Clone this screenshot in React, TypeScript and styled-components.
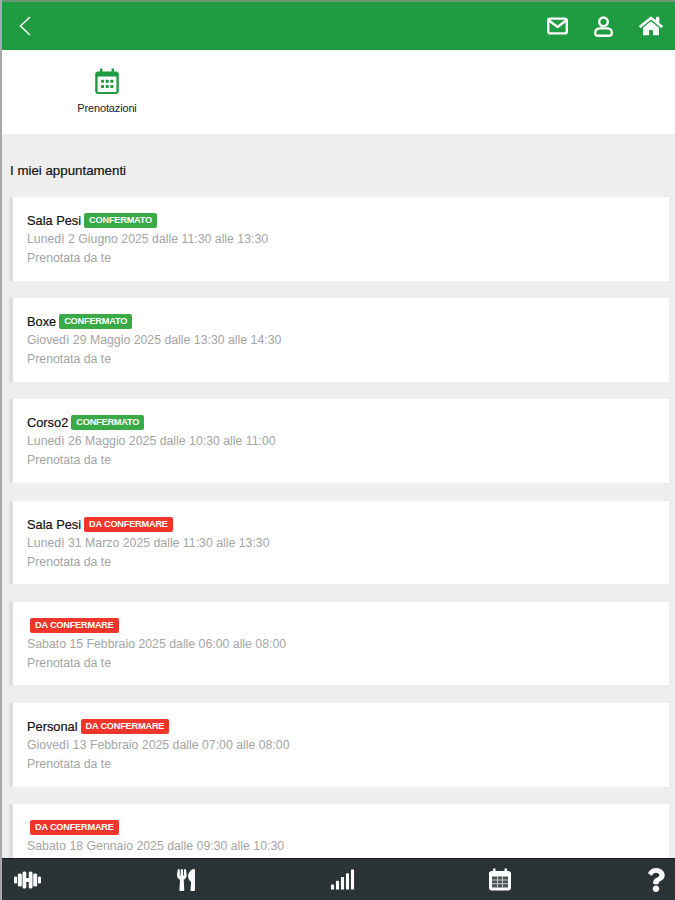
import React, { FC } from 'react';
import styled, { createGlobalStyle } from 'styled-components';
import { FaHome, FaQuestion, FaSignal, FaUtensils } from 'react-icons/fa';

const GlobalStyle = createGlobalStyle`
  html, body {
    margin: 0;
    padding: 0;
    height: 100%;
    overflow: hidden;
  }
  body {
    font-family: 'Liberation Sans', Arial, sans-serif;
    background: #eeeeee;
  }
`;

const Page = styled.div`
  display: flex;
  flex-direction: column;
  width: 675px;
  height: 900px;
  box-sizing: border-box;
  border-left: 2px solid #a9a9a9;
  overflow: hidden;
`;

const Header = styled.header`
  flex: none;
  display: flex;
  align-items: center;
  justify-content: space-between;
  height: 50px;
  box-sizing: border-box;
  margin-left: -2px;
  border-top: 2px solid #6f9472;
  background: #1f9c41;
  padding: 0 12px 0 19px;
`;

const HeaderActions = styled.div`
  display: flex;
  align-items: center;
  gap: 26px;
`;

const IconSlot = styled.span`
  display: flex;
  color: #ffffff;
`;

const Shortcuts = styled.nav`
  flex: none;
  height: 84px;
  background: #ffffff;
  display: flex;
  padding-left: 71px;
`;

const Shortcut = styled.div`
  display: flex;
  flex-direction: column;
  align-items: center;
  width: 68px;
  padding-top: 17px;
  gap: 7px;
`;

const ShortcutLabel = styled.span`
  font-size: 11px;
  letter-spacing: -0.15px;
  white-space: nowrap;
  color: #222222;
`;

const Content = styled.main`
  flex: 1;
  min-height: 0;
  overflow: hidden;
  padding: 29px 6px 0 7px;
`;

const SectionTitle = styled.h2`
  margin: 0 0 18px 1px;
  font-size: 13.3px;
  line-height: 16px;
  font-weight: 400;
  color: #111111;
  -webkit-text-stroke: 0.2px #111111;
`;

const List = styled.div`
  display: flex;
  flex-direction: column;
  gap: 17.5px;
`;

const Card = styled.article`
  flex: none;
  height: 83.7px;
  box-sizing: border-box;
  background: #ffffff;
  border-left: 4px solid #dedede;
  padding: 14px 12px 0 14px;
`;

const TitleRow = styled.div`
  display: flex;
  align-items: center;
  gap: 3px;
  height: 19px;
`;

const Title = styled.span`
  font-size: 12.8px;
  color: #111111;
  -webkit-text-stroke: 0.2px #111111;
`;

const Badge = styled.span<{ $pending?: boolean }>`
  display: inline-block;
  padding: 0 5px;
  height: 15px;
  line-height: 15px;
  border-radius: 2px;
  font-size: 9.2px;
  font-weight: 700;
  letter-spacing: -0.2px;
  color: #ffffff;
  background: ${({ $pending }) => ($pending ? '#f0352b' : '#3aaa47')};
`;

const BadgeOnly = styled.span`
  margin-left: 3px;
  display: flex;
`;

const Detail = styled.div`
  font-size: 12.3px;
  line-height: 19px;
  white-space: nowrap;
  color: #a5a5a5;
`;

const BottomBar = styled.footer`
  flex: none;
  height: 42px;
  margin-left: -2px;
  box-sizing: border-box;
  border-top: 1px solid #11181a;
  background: #2a3336;
  display: flex;
  align-items: center;
  justify-content: space-between;
  padding: 0 7px 0 14px;
`;

const BottomIcon = styled.span`
  display: flex;
  color: #ffffff;
`;

const BackIcon = () => (
  <svg width="12" height="20" viewBox="0 0 12 20" fill="none" stroke="#fff" strokeWidth="1.5">
    <path d="M11 1 1.500 10l9.500 9" />
  </svg>
);

const MailIcon = () => (
  <svg width="21" height="18" viewBox="0 0 21 18" fill="none" stroke="#fff" strokeWidth="2.400" strokeLinejoin="round">
    <rect x="1.200" y="1.600" width="18.600" height="14.800" rx="2" />
    <path d="m2 3.500 8.500 6.500L19 3.500" />
  </svg>
);

const UserIcon = () => (
  <svg width="19" height="21" viewBox="0 0 19 21" fill="none" stroke="#fff" strokeWidth="2.400">
    <circle cx="9.500" cy="5.800" r="4.300" />
    <path d="M6 12.400h7c2.700 0 4.800 1.700 4.800 4v.6c0 1.600-1 2.800-2.600 2.800H3.800c-1.600 0-2.600-1.200-2.600-2.800v-.6c0-2.300 2.100-4 4.800-4Z" />
  </svg>
);

const GreenCalendar = () => (
  <svg width="24" height="28" viewBox="0 0 24 28">
    <path
      fill="#1f9c41"
      d="M5 1.500h2.400v3h9.200v-3H19v3h2.200c1.500 0 2.600 1.100 2.600 2.600v17.200c0 1.500-1.100 2.600-2.600 2.600H2.800c-1.500 0-2.600-1.100-2.600-2.600V7.100c0-1.500 1.100-2.600 2.600-2.600H5Z"
    />
    <rect x="2.600" y="9.500" width="18.800" height="15.500" rx="0.600" fill="#fff" />
    {[6, 10.700, 15.400].map((x) =>
      [12.800, 18].map((y) => (
        <rect key={`${x}-${y}`} x={x} y={y} width="3" height="3" rx="0.500" fill="#1f9c41" />
      ))
    )}
  </svg>
);

const DumbbellIcon = () => (
  <svg width="27" height="18" viewBox="0 0 27 18" fill="#fff">
    <rect x="0" y="5.500" width="3" height="7" rx="1.200" />
    <rect x="3.800" y="2.500" width="4" height="13" rx="1.500" />
    <rect x="8.500" y="0.500" width="3.800" height="17" rx="1.500" />
    <rect x="12" y="7" width="3" height="4" />
    <rect x="14.700" y="0.500" width="3.800" height="17" rx="1.500" />
    <rect x="19.200" y="2.500" width="4" height="13" rx="1.500" />
    <rect x="24" y="5.500" width="3" height="7" rx="1.200" />
  </svg>
);

const DarkCalendar = () => (
  <svg width="22" height="23" viewBox="0 0 22 23">
    <path
      fill="#fff"
      d="M4 .5h2.500V3h9V.5H18V3h1.500C20.900 3 22 4.100 22 5.500V20c0 1.400-1.100 2.500-2.500 2.500h-17C1.100 22.500 0 21.400 0 20V5.500C0 4.100 1.100 3 2.500 3H4Z"
    />
    <rect x="3" y="8.500" width="16" height="11" fill="#4a5357" />
    <path stroke="#c8c8c8" strokeWidth="1" d="M3 12h16M3 15.700h16M8.500 8.500v11M13.500 8.500v11" />
  </svg>
);

type Appointment = {
  title: string;
  when: string;
  pending?: boolean;
};

const appointments: Appointment[] = [
  { title: 'Sala Pesi', when: 'Lunedì 2 Giugno 2025 dalle 11:30 alle 13:30' },
  { title: 'Boxe', when: 'Giovedì 29 Maggio 2025 dalle 13:30 alle 14:30' },
  { title: 'Corso2', when: 'Lunedì 26 Maggio 2025 dalle 10:30 alle 11:00' },
  { title: 'Sala Pesi', when: 'Lunedì 31 Marzo 2025 dalle 11:30 alle 13:30', pending: true },
  { title: '', when: 'Sabato 15 Febbraio 2025 dalle 06:00 alle 08:00', pending: true },
  { title: 'Personal', when: 'Giovedì 13 Febbraio 2025 dalle 07:00 alle 08:00', pending: true },
  { title: '', when: 'Sabato 18 Gennaio 2025 dalle 09:30 alle 10:30', pending: true },
];

const AppointmentCard: FC<Appointment> = ({ title, when, pending }) => {
  const badge = <Badge $pending={pending}>{pending ? 'DA CONFERMARE' : 'CONFERMATO'}</Badge>;
  return (
    <Card>
      <TitleRow>
        {title ? <Title>{title}</Title> : null}
        {title ? badge : <BadgeOnly>{badge}</BadgeOnly>}
      </TitleRow>
      <Detail>{when}</Detail>
      <Detail>Prenotata da te</Detail>
    </Card>
  );
};

const App: FC = () => (
  <>
    <GlobalStyle />
    <Page>
      <Header>
        <IconSlot>
          <BackIcon />
        </IconSlot>
        <HeaderActions>
          <IconSlot>
            <MailIcon />
          </IconSlot>
          <IconSlot>
            <UserIcon />
          </IconSlot>
          <IconSlot>
            <FaHome size={24} />
          </IconSlot>
        </HeaderActions>
      </Header>
      <Shortcuts>
        <Shortcut>
          <GreenCalendar />
          <ShortcutLabel>Prenotazioni</ShortcutLabel>
        </Shortcut>
      </Shortcuts>
      <Content>
        <SectionTitle>I miei appuntamenti</SectionTitle>
        <List>
          {appointments.map((item) => (
            <AppointmentCard key={item.when} {...item} />
          ))}
        </List>
      </Content>
      <BottomBar>
        <BottomIcon>
          <DumbbellIcon />
        </BottomIcon>
        <BottomIcon>
          <FaUtensils size={22} />
        </BottomIcon>
        <BottomIcon>
          <FaSignal size={25} />
        </BottomIcon>
        <BottomIcon>
          <DarkCalendar />
        </BottomIcon>
        <BottomIcon>
          <FaQuestion size={24} />
        </BottomIcon>
      </BottomBar>
    </Page>
  </>
);

export default App;
